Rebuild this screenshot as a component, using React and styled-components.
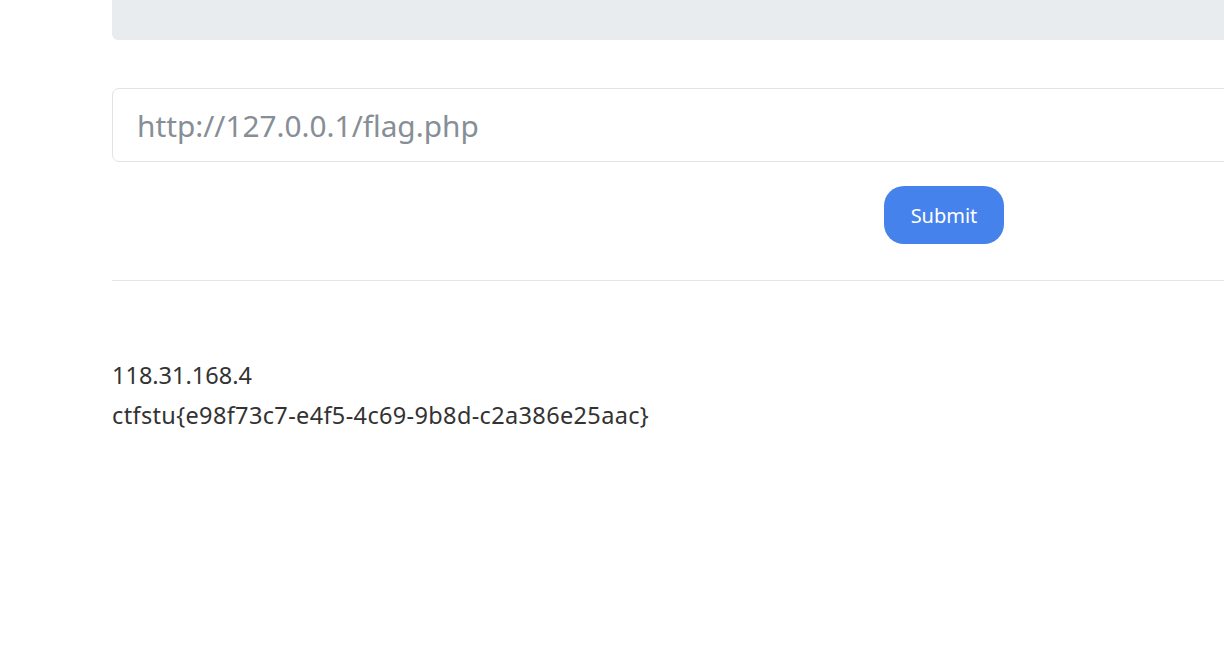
import React from 'react'
import styled, { createGlobalStyle } from 'styled-components'

const GlobalStyle = createGlobalStyle`
    html, body {
        margin: 0;
        padding: 0;
        background: #fff;
        overflow: hidden;
    }
    body {
        font-family: "Noto Sans", "Open Sans", sans-serif;
        color: #343a40;
    }
`

const Container = styled.div`
    width: 1664px;
    margin-left: 112px;
`

const Jumbotron = styled.div`
    height: 40px;
    background-color: #e9ecef;
    border-radius: 0 0 6px 6px;
    margin-bottom: 48px;
`

const Form = styled.form`
    display: flex;
    flex-direction: column;
    align-items: center;
`

const UrlInput = styled.input`
    box-sizing: border-box;
    width: 100%;
    height: 74px;
    padding: 0 24px;
    border: 1px solid #e3e3e3;
    border-radius: 7px;
    font-family: inherit;
    font-size: 29.8px;
    color: #495057;
    outline: none;
    &::placeholder {
        color: #868e96;
    }
`

const SubmitButton = styled.button`
    margin-top: 24px;
    width: 120px;
    height: 58px;
    padding: 0;
    border: none;
    border-radius: 20px;
    background-color: #4582ec;
    color: #fff;
    font-family: inherit;
    font-size: 20px;
    cursor: pointer;
`

const Divider = styled.hr`
    margin: 36px 0 0 0;
    border: none;
    border-top: 1px solid #e5e5e5;
`

const Result = styled.div`
    padding-top: 74px;
    font-size: 23.5px;
    line-height: 40px;
    color: #333;
`

const Line = styled.div`
    letter-spacing: ${p => (p.$wide ? '0.35px' : '0')};
`

export default function App() {
    return (
        <>
            <GlobalStyle />
            <Container>
                <Jumbotron />
                <Form onSubmit={e => e.preventDefault()}>
                    <UrlInput placeholder="http://127.0.0.1/flag.php" />
                    <SubmitButton type="submit">Submit</SubmitButton>
                </Form>
                <Divider />
                <Result>
                    <Line>118.31.168.4</Line>
                    <Line $wide>ctfstu{'{'}e98f73c7-e4f5-4c69-9b8d-c2a386e25aac{'}'}</Line>
                </Result>
            </Container>
        </>
    )
}
